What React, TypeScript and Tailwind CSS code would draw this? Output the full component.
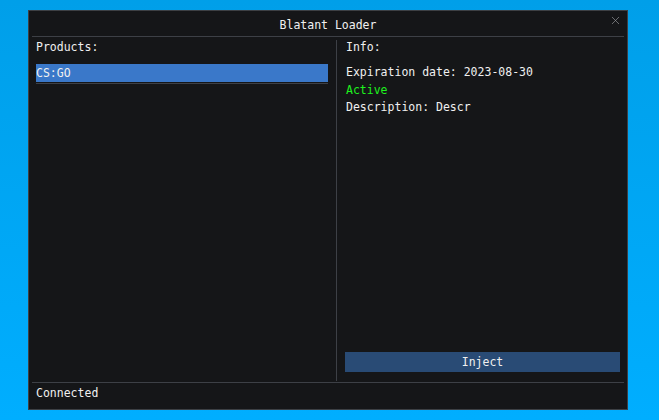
import { X } from "lucide-react";

const font = { fontFamily: '"DejaVu Sans Mono", "Liberation Mono", monospace' };

export default function App() {
	return (
		<div
			className="w-[659px] h-[420px] pl-[28px] pt-[10px] bg-gradient-to-b from-[#009fe9] to-[#00aeff] overflow-hidden"
			style={font}
		>
			<div className="w-[600px] h-[400px] border border-[#3d4044] bg-[#151618] text-[11.5px] leading-[17px] text-[#f0f0f0] flex flex-col">
				{/* title bar */}
				<div className="relative h-[25px] pt-[6px] text-center">
					Blatant Loader
					<X
						className="absolute right-[5px] top-[3px] text-[#9a9c9f]"
						size={13}
						strokeWidth={1.2}
					/>
				</div>
				<div className="h-px mx-[3px] bg-[#3d4046]" />

				{/* body */}
				<div className="h-[345px] flex pt-[2px]">
					<div className="w-[292px] ml-[7px] flex flex-col">
						<div>Products:</div>
						<div className="mt-[8px] h-[18px] leading-[18px] bg-[#3a78c9]">CS:GO</div>
						<div className="mt-px h-px bg-[#3d4046]" />
					</div>
					<div className="ml-[8px] mt-px w-px h-[341px] bg-[#3d4046]" />
					<div className="flex-1 pl-[8px] pr-[7px] pb-[10px] flex flex-col">
						<div className="pl-px">Info:</div>
						<div className="mt-[8px] pl-px leading-[17.5px]">
							<div>Expiration date: 2023-08-30</div>
							<div className="text-[#1ef21e]">Active</div>
							<div>Description: Descr</div>
						</div>
						<button className="mt-auto h-[20px] w-full bg-[#294b75] text-[#f0f0f0] leading-[20px]">
							Inject
						</button>
					</div>
				</div>

				{/* status bar */}
				<div className="h-px mx-[3px] bg-[#3d4046]" />
				<div className="pl-[7px] pt-[2px]">Connected</div>
			</div>
		</div>
	);
}
